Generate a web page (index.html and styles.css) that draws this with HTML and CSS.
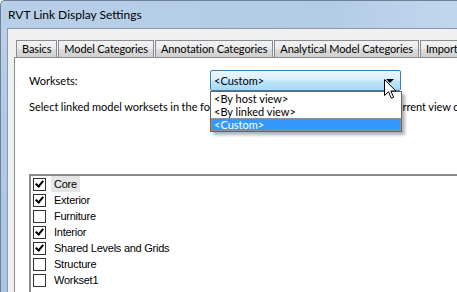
FILE: index.html
```html
<!DOCTYPE html>
<html lang="en">
<head>
  <meta charset="UTF-8">
  <meta name="viewport" content="width=device-width, initial-scale=1.0">
  <title>RVT Link Display Settings</title>
  <link rel="stylesheet" href="styles.css">
</head>
<body>
  <div class="window">
    <div class="titlebar">RVT Link Display Settings</div>
    <div class="client">
      <div class="tabs">
        <div class="tab">Basics</div>
        <div class="tab">Model Categories</div>
        <div class="tab">Annotation Categories</div>
        <div class="tab">Analytical Model Categories</div>
        <div class="tab">Import Categories</div>
      </div>
      <div class="panel">
        <div class="field-row">
          <span class="field-label">Worksets:</span>
          <div class="combo">
            <span>&lt;Custom&gt;</span>
            <span class="combo-arrow"></span>
          </div>
        </div>
        <p class="hint">Select linked model worksets in the following list to have them visible in the current view or</p>

        <ul class="checklist">
          <li class="current"><span class="box checked"></span><span class="name">Core</span></li>
          <li><span class="box checked"></span><span class="name">Exterior</span></li>
          <li><span class="box"></span><span class="name">Furniture</span></li>
          <li><span class="box checked"></span><span class="name">Interior</span></li>
          <li><span class="box checked"></span><span class="name">Shared Levels and Grids</span></li>
          <li><span class="box"></span><span class="name">Structure</span></li>
          <li><span class="box"></span><span class="name">Workset1</span></li>
        </ul>

        <!-- open drop-down of the combo -->
        <ul class="droplist">
          <li>&lt;By host view&gt;</li>
          <li>&lt;By linked view&gt;</li>
          <li class="selected">&lt;Custom&gt;</li>
        </ul>

        <svg class="cursor" width="13" height="21" viewBox="0 0 13 21">
          <path d="M0.5 0.5 L0.5 16.5 L4.5 12.8 L7.3 19.3 L9.6 18.3 L6.9 12 L11.8 12 Z" fill="#fff" stroke="#000" stroke-width="1" stroke-linejoin="miter"/>
        </svg>
      </div>
    </div>
  </div>
</body>
</html>
```

FILE: styles.css
```css
html, body {
  margin: 0;
  padding: 0;
}

body {
  width: 457px;
  height: 292px;
  overflow: hidden;
  font-family: Lato, "Liberation Sans", sans-serif;
  font-size: 11px;
  color: #000;
}

.window {
  display: flex;
  flex-direction: column;
  height: 292px;
  width: 470px;
  border-top: 1px solid #6d8095;
  border-left: 1px solid #6d8095;
  box-sizing: border-box;
  background: linear-gradient(180deg, #bcd3ea 0%, #b2cbe6 30%, #a9c6e6 100%);
  border-top-left-radius: 5px;
}

.titlebar {
  height: 27px;
  padding-left: 7px;
  line-height: 28px;
  font-size: 12px;
  background: linear-gradient(90deg, #b7cfe8 0%, #b3cce6 70%, #c2d8ee 100%);
  border-top-left-radius: 5px;
}

.client {
  flex: 1;
  display: flex;
  flex-direction: column;
  margin-left: 6px;
  border-top: 1px solid #8e9aa8;
  border-left: 1px solid #8e9aa8;
  background: #f0f0f0;
  padding: 11px 0 0 6px;
  min-height: 0;
}

.tabs {
  display: flex;
  gap: 1px;
  padding-left: 2px;
  height: 17px;
}

.tab {
  flex-shrink: 0;
  padding: 0 5px;
  border: 1px solid #898c95;
  border-bottom: none;
  line-height: 16px;
  white-space: nowrap;
  letter-spacing: -0.1px;
  background: linear-gradient(180deg, #f2f2f2 0%, #ebebeb 50%, #dddddd 51%, #cfcfcf 100%);
}

.panel {
  position: relative;
  flex: 1;
  background: #fff;
  border-top: 1px solid #898c95;
  border-left: 1px solid #898c95;
  padding: 12px 0 0 14px;
  min-height: 0;
}

.field-row {
  display: flex;
  align-items: center;
}

.field-label {
  width: 181px;
}

.combo {
  display: flex;
  align-items: center;
  justify-content: space-between;
  box-sizing: border-box;
  width: 191px;
  height: 21px;
  padding: 0 4px 0 3px;
  border: 1px solid #3c7fb1;
  border-radius: 2px;
  background: linear-gradient(180deg, #eaf6fd 0%, #d9f0fc 48%, #bee6fd 52%, #a7d9f5 100%);
}

.combo-arrow {
  width: 0;
  height: 0;
  border-left: 4px solid transparent;
  border-right: 4px solid transparent;
  border-top: 4px solid #000;
  margin-right: 2px;
}

.hint {
  margin: 8px 0 0;
  line-height: 15px;
  white-space: nowrap;
  word-spacing: -0.3px;
}

.checklist {
  list-style: none;
  margin: 60px 0 0;
  padding: 0 0 0 2px;
  border-top: 2px solid #8a8a8a;
  border-left: 2px solid #8a8a8a;
  height: 200px;
  font-family: "Liberation Sans", Arial, sans-serif;
  font-size: 11px;
  letter-spacing: -0.25px;
}

.checklist li {
  display: flex;
  align-items: center;
  height: 16px;
}

.box {
  box-sizing: border-box;
  width: 13px;
  height: 13px;
  margin-right: 5px;
  border: 1px solid #333;
  background: #fff;
  position: relative;
}

.box.checked::after {
  content: "";
  position: absolute;
  left: 3px;
  top: 0px;
  width: 3px;
  height: 6px;
  border-right: 2px solid #000;
  border-bottom: 2px solid #000;
  transform: rotate(40deg);
}

.name {
  padding: 0 3px;
  line-height: 16px;
}

.current .name {
  background: #e5e5e5;
}

.droplist {
  position: absolute;
  left: 195px;
  top: 33px;
  width: 192px;
  box-sizing: border-box;
  margin: 0;
  padding: 0;
  list-style: none;
  background: #fff;
  border: 1px solid #646464;
  box-shadow: 3px 3px 3px rgba(0, 0, 0, 0.3);
}

.droplist li {
  height: 11px;
  line-height: 11px;
  padding: 0 2px;
  border: 1px solid transparent;
}

.droplist .selected {
  background: #3399ff;
  color: #fff;
  border: 1px dotted #e8893a;
}

.cursor {
  position: absolute;
  left: 369px;
  top: 21px;
}
```
